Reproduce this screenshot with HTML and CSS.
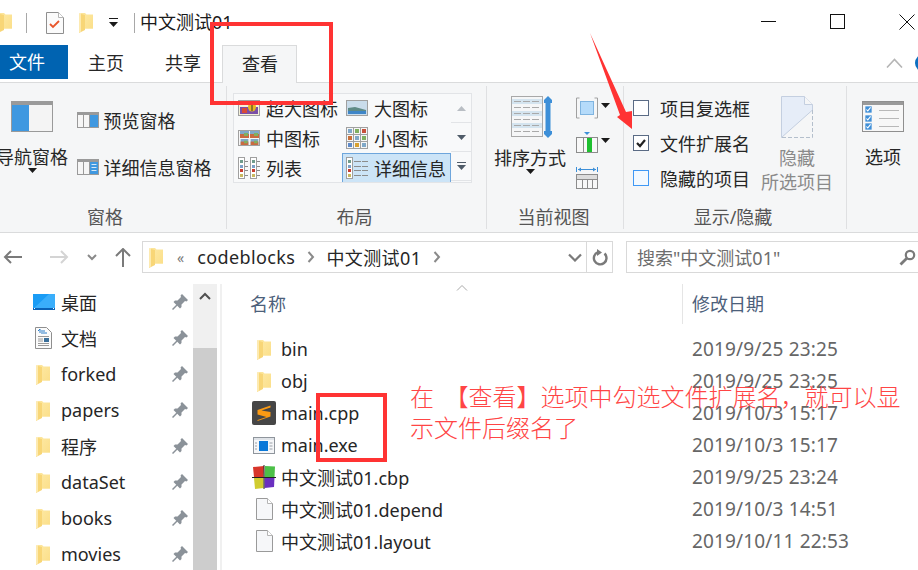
FILE: index.html
```html
<!DOCTYPE html>
<html lang="zh-CN">
<head>
    <meta charset="UTF-8">
    <title>中文测试01</title>
    <link rel="stylesheet" href="styles.css">
</head>
<body>
    <svg class="defs" width="0" height="0">
        <defs>
            <linearGradient id="folderBack" x1="0" y1="0" x2="1" y2="1">
                <stop offset="0" stop-color="#fde79f"/>
                <stop offset="1" stop-color="#fbdf8a"/>
            </linearGradient>
            <symbol id="folder" viewBox="0 0 14 21">
                <path d="M2 1h4l1.500 1.500H14V16.500H2z" fill="#fce59b"/>
                <path d="M6 3h8V16.500H6z" fill="url(#folderBack)"/>
                <path d="M0 1.500L6 3V18L0 21z" fill="#f8d677"/>
                <path d="M0 1.500L2 1V19.500L0 21z" fill="#fdeab0"/>
            </symbol>
            <symbol id="pin" viewBox="0 0 16 16">
                <path d="M10 0L16 6 14.500 7.500 13 7 9.500 10.500 9.500 13 8 14.500 1.500 8 3 6.500 5.500 6.500 9 3 8.500 1.500z" fill="#8b9299"/>
                <path d="M5 11L.5 15.500" stroke="#8b9299" stroke-width="1.500"/>
            </symbol>
            <symbol id="blank" viewBox="0 0 17 22">
                <path d="M.5.500h11l5 5v16H.500z" fill="#f6f7f9" stroke="#9a9a9a"/>
                <path d="M11.500.500v5h5" fill="#fff" stroke="#b5b5b5"/>
            </symbol>
            <symbol id="minicheck" viewBox="0 0 10 10">
                <rect x=".5" y=".5" width="9" height="9" fill="#3f8fd8"/>
                <path d="M2 5l2 2 4-5" fill="none" stroke="#fff" stroke-width="1.500"/>
            </symbol>
            <symbol id="bullets" viewBox="0 0 7 22">
                <rect x=".5" y=".5" width="6" height="21" fill="#fff" stroke="#a0a0a0"/>
                <rect x="2" y="3" width="3" height="3" fill="#6f9c8c"/>
                <rect x="2" y="8" width="3" height="3" fill="#7ba0c8"/>
                <rect x="2" y="12" width="3" height="3" fill="#c83c30"/>
                <rect x="2" y="17" width="3" height="3" fill="#c8b860"/>
            </symbol>
            <symbol id="dashes" viewBox="0 0 7 22">
                <path d="M0 4.500h7M0 9.500h7M0 13.500h7M0 18.500h7" stroke="#8c8c8c"/>
            </symbol>
            <symbol id="caret" viewBox="0 0 9 5">
                <path d="M0 0h9L4.500 5z" fill="#1a1a1a"/>
            </symbol>
            <symbol id="chev" viewBox="0 0 8 12">
                <path d="M1.500 1l4.500 5-4.500 5" fill="none" stroke="#8a8a8a" stroke-width="2"/>
            </symbol>
            <symbol id="thumb" viewBox="0 0 9 7">
                <rect width="9" height="7" fill="#7fa8c8"/>
                <rect y="3" width="9" height="4" fill="#c86a40"/>
                <rect x="4" y="2" width="4" height="3" fill="#7fb060"/>
            </symbol>
        </defs>
    </svg>

    <div class="titlebar">
        <svg class="ti-folder-cut" width="14" height="21"><use href="#folder"/></svg>
        <span class="vline first"></span>
        <svg class="ti-doc" width="18" height="22" viewBox="0 0 18 22">
            <path d="M.5.500h12l5 5v16H.500z" fill="#fbfbfb" stroke="#8f8f8f"/>
            <path d="M12.500.500v5h5" fill="#fff" stroke="#b5b5b5"/>
            <path d="M4 12l3 3 6-6" fill="none" stroke="#e8552a" stroke-width="1.800"/>
        </svg>
        <svg class="ti-folder" width="14" height="21"><use href="#folder"/></svg>
        <svg class="ti-drop" width="9" height="9" viewBox="0 0 9 9">
            <path d="M0 .500h9" stroke="#1a1a1a"/>
            <path d="M0 4h9L4.500 9z" fill="#1a1a1a"/>
        </svg>
        <span class="vline second"></span>
        <span class="wintitle">中文测试01</span>
        <div class="winctl">
            <svg width="16" height="16" viewBox="0 0 16 16"><path d="M0 7.500h15" stroke="#111"/></svg>
            <svg width="16" height="16" viewBox="0 0 16 16"><rect x=".5" y=".5" width="14" height="14" fill="none" stroke="#111"/></svg>
            <svg width="16" height="16" viewBox="0 0 16 16"><path d="M.5.500l15 15M15.500.500l-15 15" stroke="#111"/></svg>
        </div>
    </div>

    <div class="tabs">
        <div class="tab-file">文件</div>
        <div class="tab">主页</div>
        <div class="tab">共享</div>
        <div class="tab active">查看</div>
        <svg class="collapse" width="17" height="10" viewBox="0 0 17 10"><path d="M1 9.500L8.500 1.500 16 9.500" fill="none" stroke="#b5b5b5" stroke-width="1.600"/></svg>
        <span class="help"></span>
    </div>

    <div class="ribbon">
        <section class="group g-panes">
            <div class="group-body">
                <div class="big nav-col">
                    <svg width="42" height="31" viewBox="0 0 42 31">
                        <rect x=".5" y=".5" width="41" height="30" fill="#f4f4f4" stroke="#9a9a9a"/>
                        <rect x="1" y="1" width="40" height="3" fill="#9a9a9a"/>
                        <rect x="1" y="4" width="17" height="26" fill="#3f98e0"/>
                    </svg>
                    <span class="big-label">导航窗格</span>
                    <svg class="big-caret" width="9" height="5"><use href="#caret"/></svg>
                </div>
                <div class="pane-col">
                    <div class="pane-row">
                        <svg width="22" height="16" viewBox="0 0 22 16">
                            <rect x=".5" y=".5" width="21" height="15" fill="#f6f6f6" stroke="#9a9a9a"/>
                            <rect x="1" y="1" width="20" height="2" fill="#9a9a9a"/>
                            <path d="M6.500 3v12M12.500 3v12" stroke="#9a9a9a"/>
                            <rect x="13" y="3" width="8" height="12" fill="#3f98e0"/>
                        </svg>
                        <span>预览窗格</span>
                    </div>
                    <div class="pane-row">
                        <svg width="22" height="16" viewBox="0 0 22 16">
                            <rect x=".5" y=".5" width="21" height="15" fill="#f6f6f6" stroke="#9a9a9a"/>
                            <rect x="1" y="1" width="20" height="2" fill="#9a9a9a"/>
                            <path d="M6.500 3v12M12.500 3v12" stroke="#9a9a9a"/>
                            <rect x="13" y="3" width="8" height="12" fill="#3f98e0"/>
                            <path d="M14.500 5.500h5M14.500 8.500h5M14.500 11.500h5" stroke="#d5e8f8"/>
                        </svg>
                        <span>详细信息窗格</span>
                    </div>
                </div>
            </div>
            <div class="group-label">窗格</div>
        </section>

        <section class="group g-layout">
            <div class="group-body">
                <div class="gallery">
                    <div class="gallery-items">
                        <div class="gi">
                            <svg width="22" height="16" viewBox="0 0 22 16">
                                <rect x=".5" y=".5" width="21" height="15" fill="#f5f1d8" stroke="#a0a0a0"/>
                                <rect x="2" y="7" width="18" height="7" fill="#7a4fa8"/>
                                <rect x="4" y="8" width="5" height="5" fill="#d84a38"/>
                                <ellipse cx="14" cy="7" rx="4" ry="4.500" fill="#e8b820"/>
                                <path d="M14 3v8" stroke="#333"/>
                            </svg>
                            <span>超大图标</span>
                        </div>
                        <div class="gi">
                            <svg width="22" height="16" viewBox="0 0 22 16">
                                <rect x=".5" y=".5" width="21" height="15" fill="#c9dceb" stroke="#a0a0a0"/>
                                <path d="M2 8l7-1 11 3v4H2z" fill="#5f8a86"/>
                                <rect x="2" y="11" width="18" height="3" fill="#3f86c8"/>
                            </svg>
                            <span>大图标</span>
                        </div>
                        <div class="gi">
                            <svg width="22" height="16" viewBox="0 0 22 16">
                                <rect x=".5" y=".5" width="21" height="15" fill="#f6f6f6" stroke="#a0a0a0"/>
                                <svg x="2" y="1" width="9" height="7"><use href="#thumb"/></svg>
                                <svg x="12" y="1" width="9" height="7"><use href="#thumb"/></svg>
                                <svg x="2" y="9" width="9" height="6"><use href="#thumb"/></svg>
                                <svg x="12" y="9" width="9" height="6"><use href="#thumb"/></svg>
                            </svg>
                            <span>中图标</span>
                        </div>
                        <div class="gi">
                            <svg width="22" height="22" viewBox="0 0 22 22">
                                <rect x=".5" y=".5" width="21" height="21" fill="#f6f6f6" stroke="#a0a0a0"/>
                                <path d="M7.500 1v20M14.500 1v20M1 7.500h20M1 14.500h20" stroke="#a0a0a0"/>
                                <rect x="2" y="2" width="4" height="4" fill="#7fa8c8"/>
                                <rect x="9" y="2" width="4" height="4" fill="#7fb060"/>
                                <rect x="16" y="2" width="4" height="4" fill="#c8503a"/>
                                <rect x="2" y="9" width="4" height="4" fill="#c8703a"/>
                                <rect x="9" y="9" width="4" height="4" fill="#7fa8c8"/>
                                <rect x="16" y="9" width="4" height="4" fill="#7fb060"/>
                                <rect x="2" y="16" width="4" height="4" fill="#5f8ac8"/>
                                <rect x="9" y="16" width="4" height="4" fill="#d8a030"/>
                                <rect x="16" y="16" width="4" height="4" fill="#7fa8c8"/>
                            </svg>
                            <span>小图标</span>
                        </div>
                        <div class="gi">
                            <svg width="22" height="22" viewBox="0 0 22 22">
                                <svg x="0" width="7" height="22"><use href="#bullets"/></svg>
                                <path d="M7 4.500h3M7 9.500h3M7 13.500h3M7 18.500h3" stroke="#8c8c8c"/>
                                <svg x="12" width="7" height="22"><use href="#bullets"/></svg>
                                <path d="M19 4.500h3M19 9.500h3M19 13.500h3M19 18.500h3" stroke="#8c8c8c"/>
                            </svg>
                            <span>列表</span>
                        </div>
                        <div class="gi selected">
                            <svg width="22" height="22" viewBox="0 0 22 22">
                                <svg x="0" width="7" height="22"><use href="#bullets"/></svg>
                                <svg x="8" width="7" height="22"><use href="#dashes"/></svg>
                                <svg x="16" width="7" height="22"><use href="#dashes"/></svg>
                            </svg>
                            <span>详细信息</span>
                        </div>
                    </div>
                    <div class="gallery-scroll">
                        <div><svg width="9" height="5" viewBox="0 0 9 5"><path d="M0 5h9L4.500 0z" fill="#b9bec4"/></svg></div>
                        <div><svg width="9" height="5" viewBox="0 0 9 5"><path d="M0 0h9L4.500 5z" fill="#4f5b68"/></svg></div>
                        <div><svg width="9" height="8" viewBox="0 0 9 8"><path d="M0 .500h9" stroke="#4f5b68"/><path d="M0 3h9L4.500 8z" fill="#4f5b68"/></svg></div>
                    </div>
                </div>
            </div>
            <div class="group-label">布局</div>
        </section>

        <section class="group g-view">
            <div class="group-body">
                <div class="big sort-col">
                    <svg width="42" height="42" viewBox="0 0 42 42">
                        <rect x=".5" y=".5" width="31" height="40" fill="#f5f6f7" stroke="#a8a8a8"/>
                        <rect x="1" y="3" width="30" height="5" fill="#d4e4ef"/>
                        <rect x="1" y="15" width="30" height="5" fill="#d4e4ef"/>
                        <rect x="1" y="27" width="30" height="5" fill="#d4e4ef"/>
                        <path d="M3 5.500h26M3 11.500h26M3 17.500h26M3 23.500h26M3 29.500h26M3 35.500h26" stroke="#a9a9a9" stroke-dasharray="7 2"/>
                        <path d="M37 0l4 4v3h-1.500v28H41v3l-4 4-4-4v-3h1.500V7H33V4z" fill="#3d8fd8"/>
                    </svg>
                    <span class="big-label">排序方式</span>
                    <svg class="big-caret" width="9" height="5"><use href="#caret"/></svg>
                </div>
                <div class="view-col">
                    <div class="view-row">
                        <svg width="22" height="22" viewBox="0 0 22 22">
                            <path d="M3.500 1H.5v20h3M18.500 1h3v20h-3" fill="none" stroke="#a0a0a0"/>
                            <rect x="4.500" y="4.500" width="13" height="13" fill="#b5dbfa" stroke="#7fb4e0"/>
                        </svg>
                        <svg class="view-caret" width="9" height="5"><use href="#caret"/></svg>
                    </div>
                    <div class="view-row">
                        <svg width="22" height="22" viewBox="0 0 22 22">
                            <path d="M8 0h6l-3 3z" fill="#3d8fd8"/>
                            <rect x=".5" y="5.500" width="21" height="15" fill="#f8f8f8" stroke="#8c8c8c"/>
                            <path d="M7.500 6v14" stroke="#8c8c8c"/>
                            <rect x="11" y="6" width="5" height="14" fill="#1fc030"/>
                        </svg>
                        <svg class="view-caret" width="9" height="5"><use href="#caret"/></svg>
                    </div>
                    <div class="view-row">
                        <svg width="22" height="22" viewBox="0 0 22 22">
                            <path d="M.5 0v5M21.500 0v5M2 2.500h18" stroke="#3d8fd8"/>
                            <path d="M5 .500L2 2.500l3 2zM17 .500l3 2-3 2z" fill="#3d8fd8"/>
                            <rect x=".5" y="7.500" width="21" height="14" fill="#f8f8f8" stroke="#8c8c8c"/>
                            <rect x="1" y="8" width="20" height="4" fill="#dcdcdc"/>
                            <path d="M1 12.500h20M6.500 12v9M11.500 12v9M16.500 12v9" stroke="#8c8c8c"/>
                        </svg>
                    </div>
                </div>
            </div>
            <div class="group-label">当前视图</div>
        </section>

        <section class="group g-show">
            <div class="group-body">
                <div class="check-col">
                    <div class="check-row"><span class="box"></span>项目复选框</div>
                    <div class="check-row">
                        <span class="box">
                            <svg width="14" height="14" viewBox="0 0 14 14"><path d="M3 7l3 3 5-6" fill="none" stroke="#222" stroke-width="2.200"/></svg>
                        </span>
                        文件扩展名
                    </div>
                    <div class="check-row"><span class="box hover"></span>隐藏的项目</div>
                </div>
                <div class="big hide-col">
                    <svg width="32" height="42" viewBox="0 0 32 42">
                        <path d="M.5.500h23l8 8v5.500L.500 41.500z" fill="#e6edf8" stroke="#c4cfe0"/>
                        <path d="M31.500 14v27.500H.5" fill="none" stroke="#b4bfcc" stroke-dasharray="4 2"/>
                        <path d="M23.500.5v8h8" fill="#f5f6f7" stroke="#c4cfe0"/>
                    </svg>
                    <span class="big-label muted">隐藏</span>
                    <span class="big-label muted">所选项目</span>
                </div>
            </div>
            <div class="group-label">显示/隐藏</div>
        </section>

        <section class="group g-options">
            <div class="group-body">
                <div class="big opt-col">
                    <svg width="42" height="31" viewBox="0 0 42 31">
                        <rect x=".5" y=".5" width="41" height="30" fill="#f7f7f7" stroke="#8f8f8f"/>
                        <rect x="1" y="1" width="40" height="3" fill="#9a9a9a"/>
                        <svg x="3" y="5" width="7" height="7"><use href="#minicheck"/></svg>
                        <svg x="3" y="14" width="7" height="7"><use href="#minicheck"/></svg>
                        <svg x="3" y="22" width="7" height="7"><use href="#minicheck"/></svg>
                        <path d="M17 9.500h20M17 17.500h20M17 25.500h20" stroke="#b8b8b8"/>
                    </svg>
                    <span class="big-label">选项</span>
                </div>
            </div>
        </section>
    </div>

    <div class="addrbar">
        <svg class="nav-back" width="20" height="14" viewBox="0 0 20 14"><path d="M19 7H2M8 1L2 7l6 6" fill="none" stroke="#7a7a7a" stroke-width="2"/></svg>
        <svg class="nav-fwd" width="20" height="14" viewBox="0 0 20 14"><path d="M1 7h17M12 1l6 6-6 6" fill="none" stroke="#d4d4d4" stroke-width="2"/></svg>
        <svg class="nav-down" width="10" height="7" viewBox="0 0 10 7"><path d="M1 1l4 4 4-4" fill="none" stroke="#8a8a8a" stroke-width="2"/></svg>
        <svg class="nav-up" width="16" height="19" viewBox="0 0 16 19"><path d="M8 19V2M1 8l7-7 7 7" fill="none" stroke="#7a7a7a" stroke-width="2"/></svg>
        <div class="address">
            <svg class="addr-folder" width="14" height="21"><use href="#folder"/></svg>
            <span class="crumb-more">«</span>
            <span class="crumb">codeblocks</span>
            <svg class="crumb-sep" width="8" height="12"><use href="#chev"/></svg>
            <span class="crumb second-crumb">中文测试01</span>
            <svg class="crumb-sep" width="8" height="12"><use href="#chev"/></svg>
            <svg class="addr-down" width="14" height="9" viewBox="0 0 14 9"><path d="M1 1.500l6 6 6-6" fill="none" stroke="#7a7a7a" stroke-width="2.200"/></svg>
            <span class="refresh">
                <svg width="16" height="17" viewBox="0 0 16 17"><path d="M6 3.200a6.300 6.300 0 1 0 6.500 1.300" fill="none" stroke="#7a7a7a" stroke-width="2.400"/><path d="M5 0v7l5-3.500z" fill="#7a7a7a"/></svg>
            </span>
        </div>
        <div class="search">
            <span>搜索"中文测试01"</span>
            <svg width="17" height="17" viewBox="0 0 17 17"><circle cx="11" cy="6" r="4.200" fill="none" stroke="#7a7a7a" stroke-width="2.200"/><path d="M7.800 9.200L1.500 15.500" stroke="#7a7a7a" stroke-width="2.800"/></svg>
        </div>
    </div>

    <div class="panes">
        <nav class="sidebar">
            <div class="qa"><svg class="qa-icon" width="22" height="16" viewBox="0 0 22 16"><rect width="22" height="16" fill="#1a9cf5"/><path d="M0 15L16 0h6v14H0z" fill="#3aaefb"/><rect y="14" width="22" height="2" fill="#0a62b8"/><path d="M1 14h1v1H1zM20 14h1v1h-1z" fill="#fff"/></svg><span>桌面</span><svg class="pin" width="16" height="16"><use href="#pin"/></svg></div>
            <div class="qa"><svg class="qa-icon doc" width="17" height="22" viewBox="0 0 17 22"><path d="M.5.500h11l5 5v16H.500z" fill="#fbfbfb" stroke="#8f8f8f"/><path d="M3 4l2-2v4M6 4h4M6 6h6" fill="none" stroke="#2b7cc8"/><path d="M3 9.500h11M3 16.500h11M3 18.500h11M3 12h5M3 14h5" stroke="#9a9a9a"/><rect x="9" y="11" width="5" height="4" fill="#3a6f9a"/></svg><span>文档</span><svg class="pin" width="16" height="16"><use href="#pin"/></svg></div>
            <div class="qa"><svg class="qa-icon folder" width="14" height="21"><use href="#folder"/></svg><span>forked</span><svg class="pin" width="16" height="16"><use href="#pin"/></svg></div>
            <div class="qa"><svg class="qa-icon folder" width="14" height="21"><use href="#folder"/></svg><span>papers</span><svg class="pin" width="16" height="16"><use href="#pin"/></svg></div>
            <div class="qa"><svg class="qa-icon folder" width="14" height="21"><use href="#folder"/></svg><span>程序</span><svg class="pin" width="16" height="16"><use href="#pin"/></svg></div>
            <div class="qa"><svg class="qa-icon folder" width="14" height="21"><use href="#folder"/></svg><span>dataSet</span><svg class="pin" width="16" height="16"><use href="#pin"/></svg></div>
            <div class="qa"><svg class="qa-icon folder" width="14" height="21"><use href="#folder"/></svg><span>books</span><svg class="pin" width="16" height="16"><use href="#pin"/></svg></div>
            <div class="qa"><svg class="qa-icon folder" width="14" height="21"><use href="#folder"/></svg><span>movies</span><svg class="pin" width="16" height="16"><use href="#pin"/></svg></div>
        </nav>
        <div class="scrollbar">
            <div class="sb-up"><svg width="12" height="8" viewBox="0 0 12 8"><path d="M1 7l5-5 5 5" fill="none" stroke="#505050" stroke-width="2"/></svg></div>
            <div class="sb-thumb"></div>
        </div>
        <main class="files">
            <div class="file-head">
                <div class="col-name">名称</div>
                <svg class="sort-mark" width="12" height="6" viewBox="0 0 12 6"><path d="M1 5.500L6 .5l5 5" fill="none" stroke="#a8a8a8"/></svg>
                <div class="col-date">修改日期</div>
            </div>
            <div class="file"><span class="file-icon"><svg width="14" height="21"><use href="#folder"/></svg></span><span class="file-name">bin</span><span class="file-date">2019/9/25 23:25</span></div>
            <div class="file"><span class="file-icon"><svg width="14" height="21"><use href="#folder"/></svg></span><span class="file-name">obj</span><span class="file-date">2019/9/25 23:25</span></div>
            <div class="file"><span class="file-icon"><svg width="24" height="24" viewBox="0 0 24 24"><rect width="24" height="24" rx="2" fill="#464646"/><path d="M18.500 4.500L5.500 9v4.500l9 2.500-9 3v-1.500 2.500l13-4.500v-4.500L9.500 9.500l9-3z" fill="#fb9a13"/></svg></span><span class="file-name">main.cpp</span><span class="file-date">2019/10/3 15:17</span></div>
            <div class="file"><span class="file-icon"><svg width="22" height="17" viewBox="0 0 22 17"><rect x=".5" y=".5" width="21" height="16" fill="#f5f6f8" stroke="#8f959c"/><rect x="1" y="1" width="20" height="2" fill="#dfe3e8"/><rect x="6" y="4" width="9" height="10" fill="#0a78d8"/><path d="M2 6h2M2 9h2M2 12h2M16.500 6h3M16.500 9h3M16.500 12h3" stroke="#9aa0a8"/></svg></span><span class="file-name">main.exe</span><span class="file-date">2019/10/3 15:17</span></div>
            <div class="file"><span class="file-icon"><svg width="24" height="24" viewBox="0 0 24 24"><path d="M1 2l11-1-.5 11L2 12z" fill="#d8352a"/><path d="M13 1l10 .5-.5 10.500-10 .5z" fill="#4cc048"/><path d="M2 13l9.500-.5V23L3 24z" fill="#d0cc30"/><path d="M12.500 13l10-.5-.5 9.500-9.500 1z" fill="#6a2fc0"/><path d="M12 0v24M0 12.500h24" stroke="#222"/></svg></span><span class="file-name">中文测试01.cbp</span><span class="file-date">2019/9/25 23:24</span></div>
            <div class="file"><span class="file-icon"><svg width="17" height="22"><use href="#blank"/></svg></span><span class="file-name">中文测试01.depend</span><span class="file-date">2019/10/3 14:51</span></div>
            <div class="file"><span class="file-icon"><svg width="17" height="22"><use href="#blank"/></svg></span><span class="file-name">中文测试01.layout</span><span class="file-date">2019/10/11 22:53</span></div>
        </main>
    </div>

    <!-- annotations drawn on top of the screenshot -->
    <div class="mark mark-tab"></div>
    <div class="mark mark-ext"></div>
    <svg class="mark-arrow" width="50" height="105" viewBox="0 0 50 105">
        <path d="M0 0L36 79 42 78 42 96 27 84 30 82z" fill="#ff3333"/>
    </svg>
    <p class="note">在&nbsp;&nbsp;【查看】选项中勾选文件扩展名，就可以显示文件后缀名了</p>
</body>
</html>
```

FILE: styles.css
```css
* {
    box-sizing: border-box;
}
html, body {
    margin: 0;
    padding: 0;
}
body {
    position: relative;
    width: 918px;
    height: 570px;
    overflow: hidden;
    background: white;
    font-family: "Noto Sans", "Noto Sans CJK SC", sans-serif;
    font-size: 18px;
    color: #262626;
}
svg {
    display: block;
    flex: none;
}
.defs {
    position: absolute;
}

/* title bar */
.titlebar {
    display: flex;
    align-items: center;
    height: 45px;
}
.ti-folder-cut {
    margin-left: -2px;
}
.vline {
    width: 1px;
    height: 20px;
    background: #a8a8a8;
}
.vline.first {
    margin-left: 14px;
}
.ti-doc {
    margin-left: 19px;
}
.ti-folder {
    margin-left: 15px;
}
.ti-drop {
    margin-left: 16px;
}
.vline.second {
    margin-left: 16px;
}
.wintitle {
    margin: -3px 0 0 5px;
    color: #1a1a1a;
}
.winctl {
    margin-left: auto;
    display: flex;
    gap: 53px;
    padding-right: 3px;
    margin-top: -1px;
}

/* tabs */
.tabs {
    display: flex;
    align-items: stretch;
    height: 38px;
    border-bottom: 1px solid #dadbdc;
}
.tabs > * {
    flex: none;
}
.tab-file {
    width: 68px;
    height: 34px;
    background: #0063b1;
    color: white;
    line-height: 34px;
    padding-left: 9px;
}
.tab {
    width: 77px;
    padding-left: 20px;
    line-height: 36px;
}
.tab.active {
    width: 75px;
    height: 38px;
    padding-left: 19px;
    background: #f5f6f7;
    border: 1px solid #dadbdc;
    border-bottom: none;
}
.collapse {
    margin: 13px 0 0 589px;
}
.help {
    width: 18px;
    height: 18px;
    margin: 9px 0 0 12px;
    border-radius: 50%;
    background: #0c6fc0;
}

/* ribbon */
.ribbon {
    display: flex;
    height: 150px;
    padding: 3px 0;
    background: #f5f6f7;
    border-bottom: 1px solid #dadbdc;
}
.group {
    display: flex;
    flex-direction: column;
    border-right: 1px solid #dfe0e2;
}
.group-body {
    display: flex;
    height: 119px;
}
.group-label {
    height: 24px;
    line-height: 24px;
    text-align: center;
    color: #555;
}
.g-panes {
    width: 231px;
    margin-left: -4px;
}
.g-panes .group-label {
    padding-right: 12px;
}
.g-layout {
    width: 260px;
}
.g-layout .group-label {
    padding-right: 4px;
}
.g-view {
    width: 137px;
}
.g-view .group-label {
    padding-right: 3px;
}
.g-show {
    width: 223px;
}
.g-show .group-label {
    padding-right: 4px;
}
.g-options {
    flex: 1;
    border-right: none;
}
.big {
    display: flex;
    flex-direction: column;
    align-items: center;
    width: 72px;
}
.big-label {
    line-height: 24px;
    white-space: nowrap;
}
.big-caret {
    margin-top: -1px;
}
.nav-col {
    padding-top: 15px;
}
.nav-col .big-label {
    margin-top: 13px;
}
.pane-col {
    display: flex;
    flex-direction: column;
    gap: 23px;
    margin-left: 9px;
    padding-top: 22px;
}
.pane-row {
    display: flex;
    align-items: center;
    gap: 4.500px;
    height: 24px;
}

/* view gallery */
.gallery {
    display: flex;
    width: 239px;
    height: 90px;
    margin: 7px 0 0 6px;
    background: #f8f9fa;
    outline: 1px solid #e2e4e7;
    outline-offset: -1px;
}
.gallery-items {
    display: grid;
    grid-template-columns: 109px 109px;
    grid-auto-rows: 30px;
    width: 218px;
}
.gi {
    display: flex;
    align-items: center;
    gap: 6px;
    padding-left: 5px;
    white-space: nowrap;
}
.gi:nth-child(even) {
    padding-left: 4px;
}
.gi.selected {
    background: #cce4f7;
    border: 1px solid #6ea6dc;
    padding-left: 3px;
}
.gallery-scroll {
    width: 21px;
    display: flex;
    flex-direction: column;
    border-right: 1px solid #e2e4e7;
}
.gallery-scroll div {
    display: flex;
    align-items: center;
    justify-content: center;
    height: 30px;
    border-top: 1px solid #e2e4e7;
    border-bottom: 1px solid #e2e4e7;
    margin-bottom: -1px;
}

/* current view */
.sort-col {
    margin: 0 1px 0 7px;
    padding-top: 10px;
}
.sort-col svg:first-child {
    margin-left: 3px;
}
.sort-col .big-label {
    margin-top: 8px;
}
.view-col {
    margin-left: 9px;
    padding-top: 11px;
    display: flex;
    flex-direction: column;
}
.view-row {
    display: flex;
    height: 35px;
}
.view-caret {
    margin: 6px 0 0 3px;
}

/* show / hide */
.check-col {
    width: 137px;
    padding: 4px 0 0 9px;
    white-space: nowrap;
}
.check-row {
    display: flex;
    align-items: center;
    gap: 11px;
    height: 35px;
    color: #262626;
}
.box {
    display: flex;
    align-items: center;
    justify-content: center;
    width: 16px;
    height: 16px;
    background: white;
    border: 1px solid #5a6b85;
}
.box.hover {
    background: #f3f9ff;
    border-color: #3f98f5;
}
.hide-col {
    padding-top: 10px;
}
.hide-col .big-label:nth-of-type(1) {
    margin-top: 8px;
}
.muted {
    color: #8a8a8a;
}

/* options */
.opt-col {
    width: 42px;
    margin-left: 15px;
    padding-top: 15px;
}
.opt-col .big-label {
    margin-top: 13px;
}

/* address row */
.addrbar {
    display: flex;
    align-items: center;
    height: 51px;
    padding: 8px 0 11px;
}
.nav-back {
    margin-left: 3px;
}
.nav-fwd {
    margin-left: 26px;
}
.nav-down {
    margin-left: 18px;
}
.nav-up {
    margin-left: 18px;
}
.address {
    display: flex;
    align-items: center;
    flex: none;
    width: 471px;
    height: 32px;
    margin-left: 11px;
    border: 1px solid #d9d9d9;
}
.addr-folder {
    margin-left: 6px;
}
.crumb-more {
    margin-left: 14px;
    color: #7a7a7a;
    font-size: 14px;
}
.crumb {
    margin-left: 13px;
    white-space: nowrap;
    letter-spacing: .4px;
}
.crumb-sep {
    margin-left: 12px;
}
.second-crumb {
    margin-left: 11px;
}
.addr-down {
    margin-left: auto;
}
.refresh {
    display: flex;
    align-items: center;
    justify-content: center;
    width: 26px;
    height: 30px;
    margin-left: 4px;
    border-left: 1px solid #d9d9d9;
}
.search {
    display: flex;
    align-items: center;
    justify-content: space-between;
    flex: none;
    width: 292px;
    height: 32px;
    margin-left: 13px;
    padding: 0 2px 0 10px;
    border: 1px solid #d9d9d9;
    border-right: none;
    color: #6d6d6d;
}

/* panes */
.panes {
    display: flex;
    height: 286px;
    overflow: hidden;
}
.sidebar {
    width: 193px;
    flex: none;
}
.qa {
    display: flex;
    align-items: center;
    height: 36px;
    padding-left: 33px;
}
.qa-icon {
    margin-right: 6px;
}
.qa-icon.doc {
    margin: 0 9px 0 2px;
}
.qa-icon.folder {
    margin: 0 11px 0 3px;
}
.qa span {
    width: 111px;
}
.scrollbar {
    width: 24px;
    flex: none;
    background: #f0f0f0;
}
.sb-up {
    display: flex;
    align-items: center;
    justify-content: center;
    height: 24px;
}
.sb-thumb {
    height: 222px;
    margin-top: 40px;
    background: #cdcdcd;
}
.files {
    flex: 1;
    margin-left: 3px;
    padding-left: 32px;
    border-left: 2px solid #f0f0f0;
}
.file-head {
    display: flex;
    height: 49px;
    position: relative;
    color: #4c607a;
}
.col-name {
    width: 432px;
    line-height: 40px;
    margin-left: -4px;
}
.sort-mark {
    position: absolute;
    left: 202px;
    top: 1px;
}
.col-date {
    height: 40px;
    line-height: 40px;
    padding-left: 9px;
    border-left: 1px solid #e5e5e5;
}
.file {
    display: flex;
    align-items: center;
    height: 32px;
}
.file-icon {
    display: flex;
    justify-content: center;
    width: 24px;
    margin-left: -2px;
}
.file-name {
    width: 411px;
    margin-left: 5px;
    white-space: nowrap;
}
.file-date {
    color: #666;
    white-space: nowrap;
    font-size: 19px;
    letter-spacing: .15px;
}

/* red annotations */
.mark {
    position: absolute;
    border: 4px solid #ff3333;
}
.mark-tab {
    left: 210px;
    top: 22px;
    width: 123px;
    height: 83px;
}
.mark-ext {
    left: 316px;
    top: 393px;
    width: 71px;
    height: 69px;
}
.mark-arrow {
    position: absolute;
    left: 590px;
    top: 33px;
}
.note {
    position: absolute;
    left: 410px;
    top: 380px;
    width: 500px;
    margin: 0;
    font-family: "Noto Sans CJK SC", sans-serif;
    font-size: 24px;
    line-height: 31px;
    color: #ff4545;
    font-weight: 300;
}
```
